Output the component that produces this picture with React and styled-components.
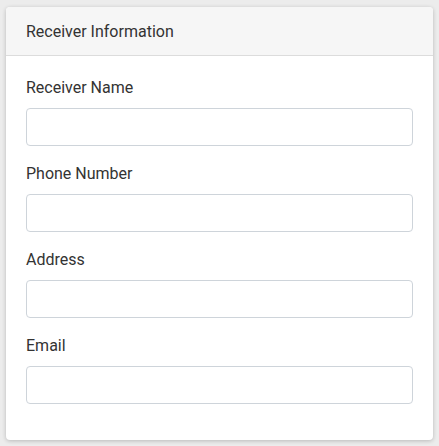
import React from 'react';
import styled, { createGlobalStyle } from 'styled-components';

const GlobalStyle = createGlobalStyle`
  html, body {
    margin: 0;
    padding: 0;
    background: #ececec;
    font-family: Roboto, "Liberation Sans", sans-serif;
  }
`;

const Page = styled.div`
  padding: 7px 6px;
`;

const Card = styled.div`
  width: 427px;
  background: #fff;
  border-radius: 4px;
  box-shadow: 0 1px 4px rgba(0, 0, 0, 0.22);
  overflow: hidden;
`;

const CardHeader = styled.div`
  height: 48px;
  display: flex;
  align-items: center;
  padding: 0 20px;
  background: #f6f6f6;
  border-bottom: 1px solid #dcdcdc;
  color: #333;
  font-size: 16px;
`;

const CardBody = styled.div`
  padding: 20px;
`;

const Field = styled.div`
  display: flex;
  flex-direction: column;
  gap: 8px;
  margin-bottom: 16px;
`;

const Label = styled.label`
  line-height: 24px;
  font-size: 16px;
  color: #333;
`;

const Input = styled.input`
  box-sizing: border-box;
  height: 38px;
  width: 100%;
  border: 1px solid #ced4da;
  border-radius: 4px;
  padding: 0 12px;
  font: inherit;
  outline: none;
`;

const fields = ['Receiver Name', 'Phone Number', 'Address', 'Email'];

const App = () => (
  <>
    <GlobalStyle />
    <Page>
      <Card>
        <CardHeader>Receiver Information</CardHeader>
        <CardBody>
          {fields.map((f) => (
            <Field key={f}>
              <Label>{f}</Label>
              <Input type="text" />
            </Field>
          ))}
        </CardBody>
      </Card>
    </Page>
  </>
);

export default App;
